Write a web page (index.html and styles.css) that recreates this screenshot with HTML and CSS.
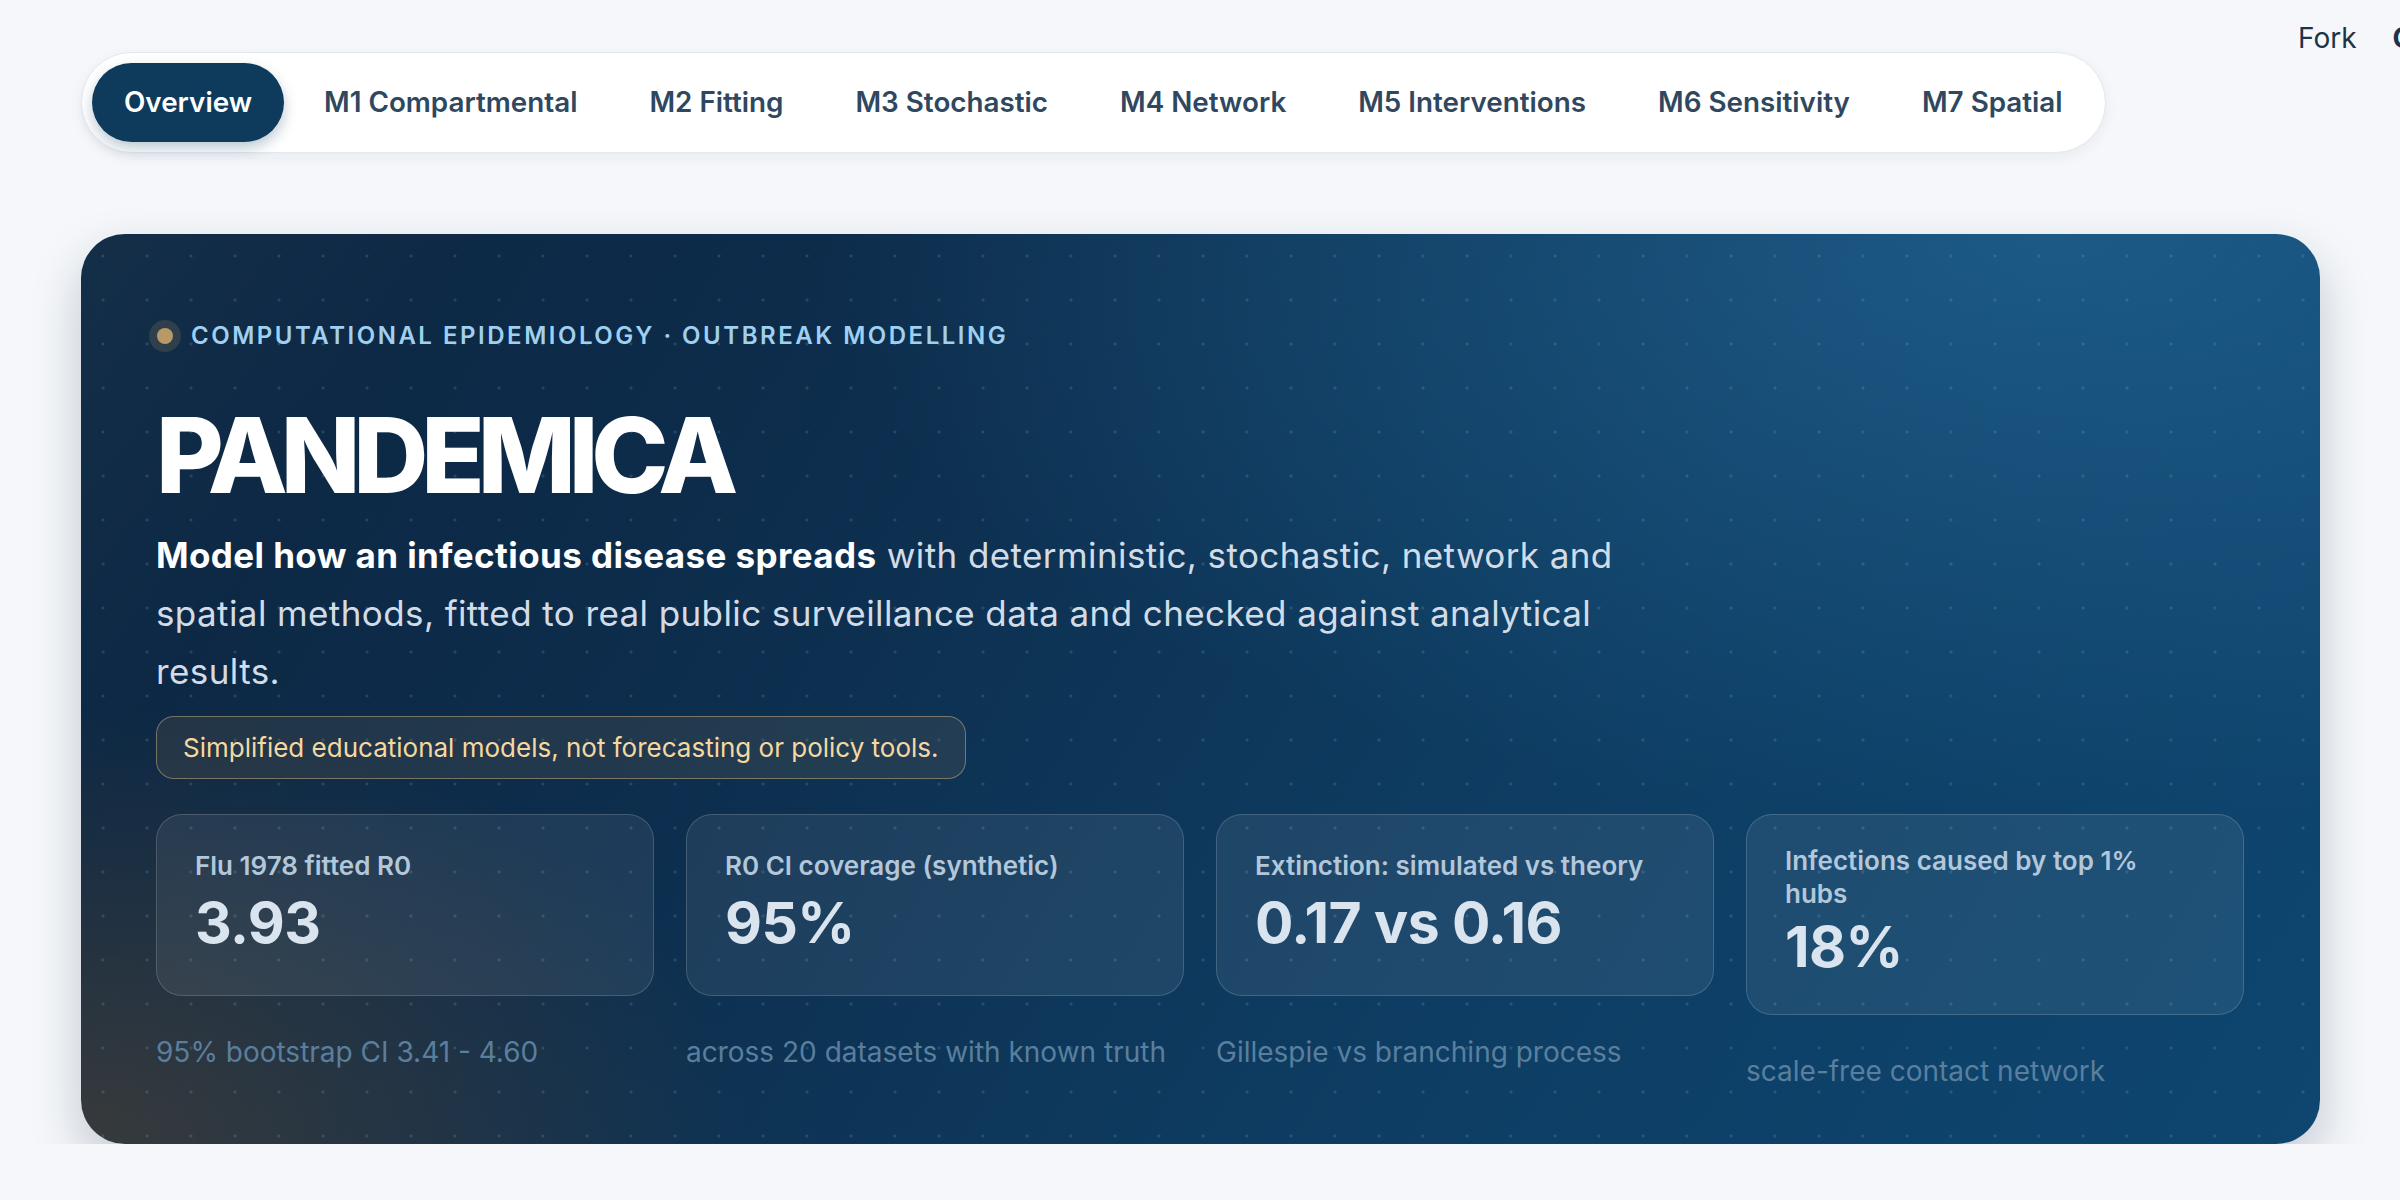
FILE: index.html
```html
<!DOCTYPE html>
<html>
<head>
  <meta charset="utf-8">
  <title>Pandemica</title>
  <link rel="stylesheet" href="styles.css">
</head>
<body>
  <header class="topbar">
    <nav class="tabs">
      <a class="tab active" href="#">Overview</a>
      <a class="tab" href="#">M1 Compartmental</a>
      <a class="tab" href="#">M2 Fitting</a>
      <a class="tab" href="#">M3 Stochastic</a>
      <a class="tab" href="#">M4 Network</a>
      <a class="tab" href="#">M5 Interventions</a>
      <a class="tab" href="#">M6 Sensitivity</a>
      <a class="tab" href="#">M7 Spatial</a>
    </nav>
    <div class="repo-links">
      <a href="#">Fork</a>
      <a class="repo-gh" href="#">GitHub</a>
    </div>
  </header>

  <main class="page">
    <section class="hero">
      <div class="eyebrow">
        <span class="pulse"></span>
        Computational epidemiology · outbreak modelling
      </div>
      <h1>PANDEMICA</h1>
      <p class="lede">
        <strong>Model how an infectious disease spreads</strong> with deterministic, stochastic, network and
        spatial methods, fitted to real public surveillance data and checked against analytical results.
      </p>
      <div class="disclaimer">Simplified educational models, not forecasting or policy tools.</div>

      <div class="stats">
        <div class="stat">
          <div class="stat-card">
            <div class="stat-label">Flu 1978 fitted R0</div>
            <div class="stat-value">3.93</div>
          </div>
          <div class="stat-note">95% bootstrap CI 3.41 - 4.60</div>
        </div>
        <div class="stat">
          <div class="stat-card">
            <div class="stat-label">R0 CI coverage (synthetic)</div>
            <div class="stat-value">95%</div>
          </div>
          <div class="stat-note">across 20 datasets with known truth</div>
        </div>
        <div class="stat">
          <div class="stat-card">
            <div class="stat-label">Extinction: simulated vs theory</div>
            <div class="stat-value">0.17 vs 0.16</div>
          </div>
          <div class="stat-note">Gillespie vs branching process</div>
        </div>
        <div class="stat">
          <div class="stat-card">
            <div class="stat-label">Infections caused by top 1% hubs</div>
            <div class="stat-value">18%</div>
          </div>
          <div class="stat-note">scale-free contact network</div>
        </div>
      </div>
    </section>
  </main>
</body>
</html>
```

FILE: styles.css
```css
:root {
  --page-bg: #f5f7fa;
  --navy: #0e3a5c;
  --tab-text: #2f4860;
  --sky: #9fd0ef;
  --gold: #b99a66;
}

* {
  box-sizing: border-box;
}

body {
  margin: 0;
  background-color: var(--page-bg);
  font-family: 'Inter', 'Noto Sans', sans-serif;
  overflow-x: hidden;
}

a {
  text-decoration: none;
  color: inherit;
}

/* top navigation */
.topbar {
  padding: 52px 0 0 81px;
  display: flex;
}

.tabs {
  display: flex;
  gap: 8px;
  padding: 10px;
  background-color: #fff;
  border: 1px solid #e2e8ef;
  border-radius: 999px;
  box-shadow: 0 4px 14px rgba(15, 40, 70, 0.06);
}

.tab {
  padding: 20px 32px;
  border-radius: 999px;
  font-size: 27.8px;
  line-height: 39px;
  font-weight: 600;
  color: var(--tab-text);
  white-space: nowrap;
}

.tab.active {
  background-color: var(--navy);
  color: #fff;
  box-shadow: 0 6px 14px rgba(14, 58, 92, 0.28);
}

.repo-links {
  position: absolute;
  top: 18px;
  left: 2298px;
  display: flex;
  gap: 36px;
  font-size: 28px;
  line-height: 40px;
  color: #1b3449;
  white-space: nowrap;
}

.repo-gh {
  font-weight: 700;
}

/* hero */
.page {
  padding: 81px 80px 0 81px;
}

.hero {
  border-radius: 44px;
  padding: 84px 76px 52px 75px;
  color: #fff;
  background:
    radial-gradient(circle, rgba(170, 210, 240, 0.16) 1.3px, transparent 1.8px) 0 0 / 44px 44px,
    linear-gradient(125deg, rgba(60, 90, 110, 0.18) 0%, transparent 14%),
    radial-gradient(ellipse 30% 48% at 0% 100%, rgba(82, 68, 52, 0.62), transparent),
    radial-gradient(ellipse 55% 65% at 88% 0%, rgba(40, 112, 160, 0.55), transparent),
    linear-gradient(120deg, #0c2540 0%, #0d2d4c 30%, #0e3d63 65%, #0d4670 100%);
  box-shadow: 0 22px 50px rgba(15, 40, 70, 0.22);
}

.eyebrow {
  display: flex;
  align-items: center;
  gap: 18px;
  font-size: 24px;
  line-height: 35px;
  font-weight: 600;
  letter-spacing: 0.105em;
  text-transform: uppercase;
  color: var(--sky);
}

.pulse {
  width: 16px;
  height: 16px;
  border-radius: 50%;
  background-color: var(--gold);
  box-shadow: 0 0 0 8px rgba(185, 154, 102, 0.18);
  margin-left: 1px;
}

h1 {
  margin: 50px 0 0;
  font-size: 104px;
  line-height: 1;
  font-weight: 800;
  letter-spacing: -0.068em;
}

.lede {
  margin: 19px 0 0;
  max-width: 1500px;
  font-size: 35px;
  line-height: 58px;
  letter-spacing: 0.4px;
  color: #d2dce7;
}

.lede strong {
  color: #fff;
  font-weight: 700;
}

.disclaimer {
  margin-top: 16px;
  width: fit-content;
  padding: 12px 26px;
  border: 1px solid rgba(226, 194, 132, 0.45);
  border-radius: 18px;
  background-color: rgba(190, 150, 90, 0.12);
  font-size: 26px;
  line-height: 37px;
  color: #f5d8a0;
}

/* stat tiles */
.stats {
  margin-top: 35px;
  display: grid;
  grid-template-columns: repeat(4, 1fr);
  gap: 32px;
  align-items: start;
}

.stat-card {
  min-height: 182px;
  padding: 29px 44px 35px 38px;
  border: 1px solid rgba(255, 255, 255, 0.16);
  border-radius: 26px;
  background-color: rgba(255, 255, 255, 0.07);
  display: flex;
  flex-direction: column;
  justify-content: space-evenly;
  gap: 5px;
}

.stat-label {
  font-size: 26px;
  line-height: 33px;
  font-weight: 600;
  color: #b3c7db;
}

.stat-value {
  font-size: 57px;
  line-height: 64px;
  font-weight: 700;
  letter-spacing: -0.01em;
  color: #d9e4ef;
}

.stat-note {
  margin-top: 35px;
  font-size: 28px;
  line-height: 1.5;
  color: #5a7f9e;
}
```
